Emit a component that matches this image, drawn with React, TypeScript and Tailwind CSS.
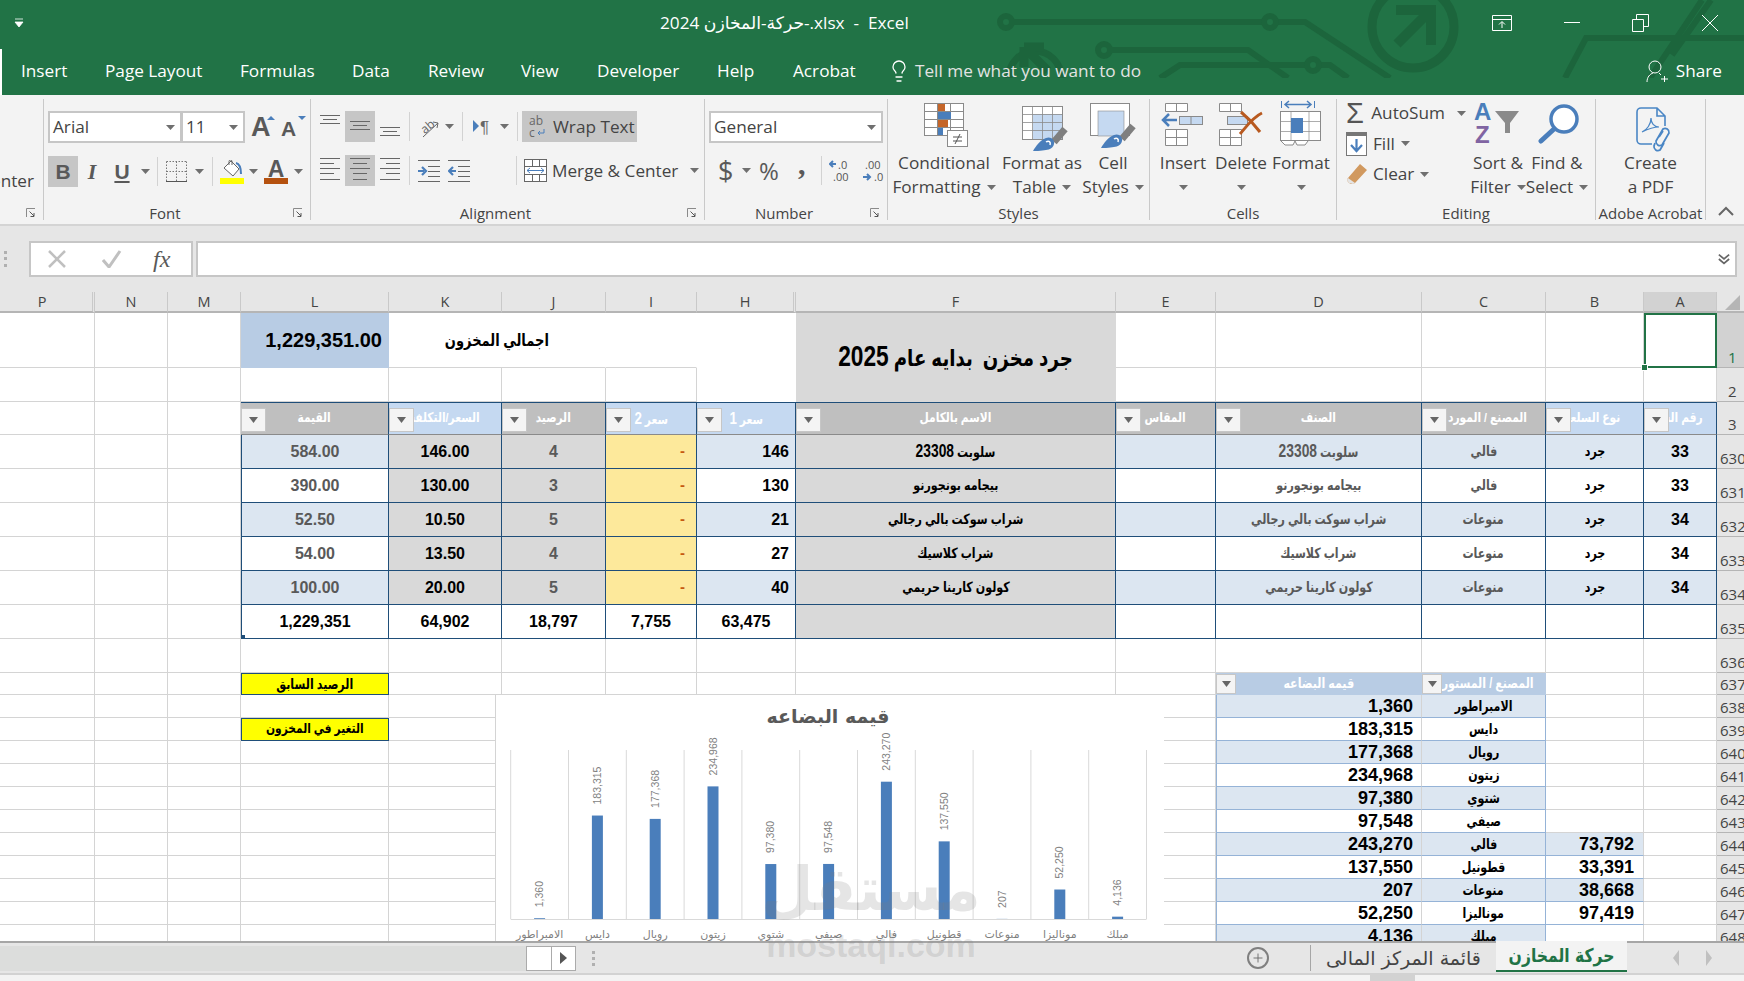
import { Lightbulb, Plus } from "lucide-react";
import { twMerge } from "tailwind-merge";
import type { ReactNode } from "react";

const BLUE = "border-[#1f4e79]";

function Caret({ className = "" }: { className?: string }) {
  return (
    <svg width="9" height="5" viewBox="0 0 9 5" className={twMerge("inline-block shrink-0", className)}>
      <path d="M0 0h9L4.5 5z" fill="#6f6f6f" />
    </svg>
  );
}

function Launcher() {
  return (
    <svg width="10" height="10" viewBox="0 0 10 10" className="absolute right-[7px] top-[6px]">
      <path d="M.5 9V.5H9" fill="none" stroke="#8a8a8a" />
      <path d="M3.5 3.5L8 8M8 5v3.5H4.5" fill="none" stroke="#555" />
    </svg>
  );
}

function Group({ w, label, launcher, children }: { w: string; label?: string; launcher?: boolean; children: ReactNode }) {
  return (
    <div className={twMerge("relative flex flex-col shrink-0 h-full", w)}>
      <div className="flex-1 min-h-0">{children}</div>
      <div className={twMerge("relative h-[22px] leading-[24px] text-center text-[15px] text-[#444] whitespace-nowrap", launcher && "pr-[24px]")}>
        {label}
        {launcher && <Launcher />}
      </div>
    </div>
  );
}

const GroupSep = () => <div className="w-px shrink-0 my-1 bg-[#c9c9c9]" />;
const ToolSep = ({ className = "" }: { className?: string }) => <div className={twMerge("w-px h-[29px] bg-[#d2d2d2] shrink-0", className)} />;

function Lines({ rows, selected, w = "w-[20px]" }: { rows: [number, number, number][]; selected?: boolean; w?: string }) {
  return (
    <div className={twMerge("h-[31px] flex items-center justify-center shrink-0", w, selected && "bg-[#c6c6c6]")}>
      <svg width="20" height="31" viewBox="0 0 20 31">
        {rows.map(([x, y, l], i) => (
          <path key={i} d={`M${x} ${y + 0.5}h${l}`} stroke="#666" />
        ))}
      </svg>
    </div>
  );
}

function Combo({ w, text }: { w: string; text: string }) {
  return (
    <div className={twMerge("flex items-center justify-between h-[32px] bg-white border-2 border-[#c6c6c6] pl-[3px] pr-[5px] text-[17.2px] text-[#444] shrink-0", w)}>
      <span>{text}</span>
      <Caret />
    </div>
  );
}

function BigBtn({ w, icon, l1, l2, caret = true }: { w: string; icon: ReactNode; l1: string; l2?: string; caret?: boolean }) {
  return (
    <div className={twMerge("flex flex-col items-center shrink-0 text-[17.2px] leading-[24px] text-[#444] whitespace-nowrap", w)}>
      <div className="h-[48px] flex items-start justify-center">{icon}</div>
      <div>{l1}</div>
      <div className="flex items-center gap-[6px] h-[24px]">
        {l2}
        {caret && <Caret />}
      </div>
    </div>
  );
}

const G = "#8a8a8a";

const CondIcon = () => (
  <svg width="46" height="46" viewBox="0 0 46 46" className="ml-[6px]">
    <rect x=".5" y=".5" width="39" height="32" fill="#fff" stroke={G} />
    <path d="M13.5 0v32M26.5 0v32M0 8.5h40M0 16.5h40M0 24.5h40" stroke={G} />
    <rect x="14" y="1" width="7" height="7" fill="#c5662a" />
    <rect x="14" y="9" width="13" height="7" fill="#4a7ebb" />
    <rect x="14" y="17" width="10" height="7" fill="#c5662a" />
    <rect x="14" y="25" width="5" height="7" fill="#4a7ebb" />
    <rect x="23.5" y="27.5" width="20" height="16" fill="#fff" stroke={G} />
    <path d="M29 34h9M29 38h9M36 31l-5 10" stroke="#555" fill="none" />
  </svg>
);

const Brush = () => (
  <>
    <path d="M43 23L32 36" stroke="#7f7f7f" strokeWidth="7" fill="none" />
    <path d="M11 45c3-5 7-11 13-13 5-2 9 2 8 6-1 5-6 7-21 7z" fill="#4a7ebb" />
    <path d="M24 36c3-2 5 0 4 3" stroke="#fff" strokeWidth="1.5" fill="none" />
  </>
);

const TableIcon = () => (
  <svg width="46" height="46" viewBox="0 0 46 46" className="mt-[3px] ml-[6px]">
    <rect x=".5" y=".5" width="40" height="33" fill="#fff" stroke={G} />
    <rect x="11" y="8" width="29" height="25" fill="#c5d9f1" />
    <path d="M10.5 0v33M20.5 0v33M30.5 0v33M0 8.5h40M0 16.5h40M0 24.5h40" stroke={G} strokeWidth=".8" />
    <Brush />
  </svg>
);

const CellStyleIcon = () => (
  <svg width="46" height="46" viewBox="0 0 46 46">
    <rect x=".5" y=".5" width="39" height="32" fill="#fff" stroke={G} />
    <rect x="8" y="8" width="26" height="25" fill="#c5d9f1" stroke={G} strokeWidth=".6" />
    <Brush />
  </svg>
);

const InsertIcon = () => (
  <svg width="44" height="46" viewBox="0 0 44 46">
    <path d="M4.5.5h22v8h-22zM15.5 0v8M4.5 26.5h22v16h-22zM4.5 34.5h22M15.5 26v16" fill="#fff" stroke={G} />
    <rect x="18.5" y="13.5" width="23" height="8" fill="#c5d9f1" stroke={G} />
    <path d="M30 13v8" stroke={G} />
    <path d="M8 11l-6 6 6 6M2 17h14" fill="none" stroke="#4a7ebb" strokeWidth="2.5" />
  </svg>
);

const DeleteIcon = () => (
  <svg width="44" height="46" viewBox="0 0 44 46">
    <path d="M.5.5h22v8H.5zM11.5 0v8M.5 26.5h22v16H.5zM.5 34.5h22M11.5 26v16" fill="#fff" stroke={G} />
    <rect x="8.5" y="13.5" width="20" height="8" fill="#c5d9f1" stroke={G} />
    <path d="M21 31C27 24 34 14 43 10M22 9c6 5 13 12 19 20" fill="none" stroke="#b8591f" strokeWidth="3" />
  </svg>
);

const FormatIcon = () => (
  <svg width="42" height="46" viewBox="0 0 42 46" className="mt-[-3px]">
    <path d="M1.5 1v7M34.5 1v7" stroke="#4a7ebb" />
    <path d="M5 4.5h26M9 1L5 4.5 9 8M27 1l4 3.5L27 8" fill="none" stroke="#4a7ebb" strokeWidth="1.5" />
    <rect x=".5" y="11.5" width="40" height="29" fill="#fff" stroke={G} />
    <path d="M11 11v30M29 11v30M0 21.5h40M0 31.5h40" stroke={G} strokeWidth=".7" />
    <rect x="11" y="18" width="12" height="15" fill="#4a7ebb" />
    <path d="M1 41l4 4h8l2-4 2 4h8l3-4" fill="#fff" stroke={G} />
  </svg>
);

const SortIcon = () => (
  <svg width="48" height="44" viewBox="0 0 48 44" className="mt-[-2px]">
    <text x="0" y="19" fontSize="24" fontWeight="700" fill="#4a7ebb" fontFamily="Liberation Sans">A</text>
    <text x="1" y="42" fontSize="24" fontWeight="700" fill="#8064a2" fontFamily="Liberation Sans">Z</text>
    <path d="M21 10h24l-9 12v10h-5V22z" fill="#8a8a8a" />
  </svg>
);

const FindIcon = () => (
  <svg width="44" height="42" viewBox="0 0 44 42" className="ml-[6px]">
    <circle cx="26" cy="16" r="13" fill="#fff" stroke="#4a7ebb" strokeWidth="3.5" />
    <path d="M16 26L3 38" stroke="#4a7ebb" strokeWidth="5" strokeLinecap="round" />
  </svg>
);

const PdfIcon = () => (
  <svg width="40" height="46" viewBox="0 0 40 46" className="ml-[8px]">
    <path d="M2 5a4 4 0 0 1 4-4h16l8 8v10M17 37H6a4 4 0 0 1-4-4V5M22 1v8h8" fill="none" stroke="#4a86c5" strokeWidth="1.6" />
    <path d="M7 25c5-2 9-8 9-14 0 5 3 9 8 9-6 0-11 2-17 5z" fill="none" stroke="#4a86c5" strokeWidth="1.2" />
    <path d="M28 22l-7 12a4 4 0 0 0 6 4l7-12a4 4 0 0 0-6-4zM24 30l4-6" fill="none" stroke="#4a86c5" strokeWidth="1.8" />
    <path d="M20 36l-1 3a4 4 0 0 0 6 4l4-7" fill="none" stroke="#4a86c5" strokeWidth="1.8" />
  </svg>
);

function Ribbon() {
  const topA: [number, number, number][] = [[0, 4, 20], [3, 8, 14], [0, 12, 20]];
  const midA: [number, number, number][] = [[0, 10, 20], [3, 14, 14], [0, 18, 20]];
  const botA: [number, number, number][] = [[0, 16, 20], [3, 20, 14], [0, 24, 20]];
  const leftA: [number, number, number][] = [[0, 3, 20], [0, 8, 14], [0, 13, 20], [0, 18, 14], [0, 24, 20]];
  const centerA: [number, number, number][] = [[0, 3, 20], [3, 8, 14], [0, 13, 20], [3, 18, 14], [3, 24, 14]];
  const rightA: [number, number, number][] = [[0, 3, 20], [6, 8, 14], [0, 13, 20], [6, 18, 14], [0, 24, 20]];
  return (
    <div className="flex h-[131px] shrink-0 bg-[#f3f3f3] border-b-2 border-[#d4d4d4]">
      <Group w="w-[43px]" launcher>
        <div className="h-full overflow-hidden relative">
          <span className="absolute right-[9px] top-[74px] text-[17.2px] text-[#444] leading-[24px] whitespace-nowrap">Center</span>
        </div>
      </Group>
      <GroupSep />

      <Group w="w-[266px]" label="Font" launcher>
        <div className="flex items-start pt-[16px] pl-[4px] h-[48px]">
          <Combo w="w-[134px]" text="Arial" />
          <Combo w="w-[64px] ml-[-1px]" text="11" />
          <span className="ml-[6px] relative w-[24px] h-[32px] text-[27px] leading-[32px] font-['Liberation_Sans'] font-bold text-[#595959]">A
            <span className="absolute right-0 top-[5px] w-0 h-0 border-x-[4px] border-x-transparent border-b-[4px] border-b-[#4a7ebb]" />
          </span>
          <span className="ml-[6px] relative w-[26px] h-[32px] text-[21px] leading-[36px] font-['Liberation_Sans'] font-bold text-[#595959]">A
            <span className="absolute right-[1px] top-[5px] w-0 h-0 border-x-[4px] border-x-transparent border-t-[4px] border-t-[#4a7ebb]" />
          </span>
        </div>
        <div className="flex items-center mt-[13px] pl-[4px] h-[31px] font-['Liberation_Sans'] text-[#595959]">
          <div className="w-[30px] h-[31px] bg-[#c6c6c6] flex items-center justify-center text-[21px] font-bold">B</div>
          <div className="w-[28px] text-center text-[22px] italic font-['Liberation_Serif'] font-bold">I</div>
          <div className="w-[32px] text-center text-[21px] font-bold underline underline-offset-2">U</div>
          <div className="w-[14px] flex justify-center"><Caret /></div>
          <ToolSep className="ml-[5px]" />
          <svg width="21" height="21" viewBox="0 0 21 21" className="ml-[8px]">
            <path d="M.5 .5h20M.5 10.5h20M.5 .5v20M10.5 .5v20M20.5 .5v20" stroke="#777" strokeDasharray="1.5 1.5" fill="none" />
            <path d="M0 20.5h21" stroke="#555" />
          </svg>
          <Caret className="ml-[8px]" />
          <ToolSep className="ml-[8px]" />
          <div className="ml-[7px] w-[24px] flex flex-col items-center">
            <svg width="20" height="18" viewBox="0 0 20 18">
              <path d="M9 1l8 8-6 7-9-8z" fill="#fff" stroke="#666" />
              <path d="M7 5V1.5a1.5 1.5 0 0 1 3 0V5" fill="none" stroke="#666" />
              <path d="M14 3c4 1 5 5 5 11" fill="none" stroke="#4a7ebb" strokeWidth="2" />
            </svg>
            <div className="w-[24px] h-[6px] bg-[#ffff00]" />
          </div>
          <Caret className="ml-[5px]" />
          <div className="ml-[6px] w-[24px] flex flex-col items-center">
            <span className="text-[23px] leading-[18px] font-bold h-[18px]">A</span>
            <div className="w-[24px] h-[6px] bg-[#b5510f]" />
          </div>
          <Caret className="ml-[6px]" />
        </div>
      </Group>
      <GroupSep />

      <Group w="w-[393px]" label="Alignment" launcher>
        <div className="flex items-center pt-[16px] pl-[9px]">
          <Lines rows={topA} />
          <Lines rows={midA} selected w="w-[30px] ml-[5px]" />
          <Lines rows={botA} w="w-[20px] ml-[5px]" />
          <ToolSep className="ml-[9px]" />
          <svg width="22" height="26" viewBox="0 0 22 26" className="ml-[9px]">
            <text x="1" y="17" fontSize="12" fill="#666" transform="rotate(-40 8 12)" fontFamily="Open Sans">ab</text>
            <path d="M4 23L19 9M14 8l5 1-1 5" fill="none" stroke="#666" />
          </svg>
          <Caret className="ml-[4px]" />
          <ToolSep className="ml-[8px]" />
          <svg width="19" height="20" viewBox="0 0 19 20" className="ml-[10px]">
            <path d="M0 3l6 6-6 6z" fill="#4a7ebb" />
            <text x="7" y="16" fontSize="17" fill="#666" fontFamily="Liberation Sans">¶</text>
          </svg>
          <Caret className="ml-[8px]" />
          <ToolSep className="ml-[8px]" />
          <div className="ml-[4px] w-[115px] h-[31px] bg-[#c6c6c6] flex items-center pl-[7px] gap-[7px] text-[17.2px] text-[#444]">
            <svg width="17" height="24" viewBox="0 0 17 24">
              <text x="0" y="10" fontSize="12" fill="#666" fontFamily="Open Sans">ab</text>
              <text x="0" y="22" fontSize="12" fill="#666" fontFamily="Open Sans">c</text>
              <path d="M15 14v4H9M11 16l-2 2 2 2" fill="none" stroke="#4a7ebb" />
            </svg>
            <span>Wrap Text</span>
          </div>
        </div>
        <div className="flex items-center mt-[13px] pl-[9px] h-[31px]">
          <Lines rows={leftA} />
          <Lines rows={centerA} selected w="w-[30px] ml-[5px]" />
          <Lines rows={rightA} w="w-[20px] ml-[5px]" />
          <ToolSep className="ml-[9px]" />
          <svg width="22" height="22" viewBox="0 0 22 22" className="ml-[8px]">
            <path d="M0 .5h22M10 6.5h12M10 11.5h12M10 16.5h12M0 21.5h22" stroke="#666" />
            <path d="M0 11h6M4 7l4 4-4 4" fill="none" stroke="#4a7ebb" strokeWidth="2.2" />
          </svg>
          <svg width="22" height="22" viewBox="0 0 22 22" className="ml-[8px]">
            <path d="M0 .5h22M10 6.5h12M10 11.5h12M10 16.5h12M0 21.5h22" stroke="#666" />
            <path d="M8 11H2M5 7l-4 4 4 4" fill="none" stroke="#4a7ebb" strokeWidth="2.2" />
          </svg>
          <ToolSep className="ml-[46px]" />
          <svg width="23" height="23" viewBox="0 0 23 23" className="ml-[7px]">
            <rect x=".5" y=".5" width="22" height="22" fill="#fff" stroke="#666" />
            <path d="M0 7.5h23M0 15.5h23M8.5 0v7M15.5 0v7M8.5 16v7M15.5 16v7" stroke="#666" />
            <path d="M3 11.5h17M6 9l-3 2.5L6 14M17 9l3 2.5L17 14" fill="none" stroke="#4a7ebb" />
          </svg>
          <span className="ml-[5px] text-[17.2px] text-[#444] whitespace-nowrap">Merge &amp; Center</span>
          <Caret className="ml-[12px]" />
        </div>
      </Group>
      <GroupSep />

      <Group w="w-[182px]" label="Number" launcher>
        <div className="pt-[16px] pl-[4px]"><Combo w="w-[174px]" text="General" /></div>
        <div className="flex items-center mt-[12px] pl-[13px] h-[31px] text-[#595959]">
          <span className="w-[20px] text-[27px] leading-[31px] font-['Open_Sans']">$</span>
          <Caret className="ml-[4px]" />
          <span className="ml-[8px] w-[22px] text-[24px] leading-[31px] font-['Open_Sans']">%</span>
          <span className="ml-[17px] w-[9px] text-[30px] leading-[26px] font-bold font-['Liberation_Serif'] h-[26px] -mt-[14px]">,</span>
          <ToolSep className="ml-[14px]" />
          <svg width="24" height="26" viewBox="0 0 24 26" className="ml-[7px]">
            <path d="M7 6H1M4 3L1 6l3 3" fill="none" stroke="#4a7ebb" strokeWidth="2" />
            <text x="9" y="11" fontSize="11" fill="#555" fontFamily="Open Sans">.0</text>
            <text x="4" y="23" fontSize="11" fill="#555" fontFamily="Open Sans">.00</text>
          </svg>
          <svg width="24" height="26" viewBox="0 0 24 26" className="ml-[9px]">
            <text x="3" y="11" fontSize="11" fill="#555" fontFamily="Open Sans">.00</text>
            <path d="M1 19h7M5 16l3 3-3 3" fill="none" stroke="#4a7ebb" strokeWidth="2" />
            <text x="12" y="23" fontSize="11" fill="#555" fontFamily="Open Sans">.0</text>
          </svg>
        </div>
      </Group>
      <GroupSep />

      <Group w="w-[261px]" label="Styles">
        <div className="flex pt-[8px]">
          <BigBtn w="w-[112px]" icon={<CondIcon />} l1="Conditional" l2="Formatting" />
          <BigBtn w="w-[84px]" icon={<TableIcon />} l1="Format as" l2="Table" />
          <BigBtn w="w-[58px]" icon={<CellStyleIcon />} l1="Cell" l2="Styles" />
        </div>
      </Group>
      <GroupSep />

      <Group w="w-[186px]" label="Cells">
        <div className="flex pt-[8px]">
          <BigBtn w="w-[66px]" icon={<InsertIcon />} l1="Insert" />
          <BigBtn w="w-[50px]" icon={<DeleteIcon />} l1="Delete" />
          <BigBtn w="w-[70px]" icon={<FormatIcon />} l1="Format" />
        </div>
      </Group>
      <GroupSep />

      <Group w="w-[258px]" label="Editing">
        <div className="flex pt-[8px]">
          <div className="w-[129px] shrink-0 flex flex-col text-[17.2px] text-[#444] pl-[9px] -mt-[5px]">
            <div className="flex items-center h-[30px]">
              <span className="w-[27px] text-[29px] leading-[30px] font-['Liberation_Sans'] text-[#555]">Σ</span>
              <span>AutoSum</span>
              <Caret className="ml-[12px]" />
            </div>
            <div className="flex items-center h-[31px]">
              <svg width="21" height="24" viewBox="0 0 21 24" className="mr-[6px]">
                <rect x=".5" y=".5" width="20" height="23" fill="#fff" stroke="#777" />
                <rect x="0" y="0" width="21" height="4" fill="#777" />
                <path d="M10.5 7v11M5 13l5.5 6 5.5-6" fill="none" stroke="#4a7ebb" strokeWidth="2.2" />
              </svg>
              <span>Fill</span>
              <Caret className="ml-[6px]" />
            </div>
            <div className="flex items-center h-[30px]">
              <svg width="22" height="22" viewBox="0 0 22 22" className="mr-[5px]">
                <path d="M14 1l7 6-12 13c-3 2-5 1-7-1-1-2-1-3 0-4z" fill="#d1995f" />
                <path d="M2 15l7 5-2 1-4-1-2-3z" fill="#e4e4e4" />
              </svg>
              <span>Clear</span>
              <Caret className="ml-[6px]" />
            </div>
          </div>
          <BigBtn w="w-[64px]" icon={<SortIcon />} l1="Sort &" l2="Filter" />
          <BigBtn w="w-[54px]" icon={<FindIcon />} l1="Find &" l2="Select" />
        </div>
      </Group>
      <GroupSep />

      <Group w="w-[109px]" label="Adobe Acrobat">
        <div className="flex justify-center pt-[8px]">
          <BigBtn w="w-[80px]" icon={<div className="mt-[4px]"><PdfIcon /></div>} l1="Create" l2="a PDF" caret={false} />
        </div>
      </Group>
      <GroupSep />
      <div className="flex-1 relative">
        <svg width="16" height="10" viewBox="0 0 16 10" className="absolute left-[12px] bottom-[8px]">
          <path d="M1 9l7-7 7 7" fill="none" stroke="#666" strokeWidth="2" />
        </svg>
      </div>
    </div>
  );
}

function Header() {
  const tabs: [string, string][] = [
    ["Insert", "w-[84px]"], ["Page Layout", "w-[135px]"], ["Formulas", "w-[112px]"], ["Data", "w-[76px]"], ["Review", "w-[93px]"],
    ["View", "w-[76px]"], ["Developer", "w-[120px]"], ["Help", "w-[76px]"], ["Acrobat", "w-[97px]"],
  ];
  return (
    <div className="relative h-[95px] shrink-0 bg-[#217346] text-white overflow-hidden">
      <svg width="1744" height="78" viewBox="0 0 1744 78" className="absolute left-0 top-0" fill="none" stroke="#1c653c" strokeWidth="6">
        <circle cx="1006" cy="22" r="6" />
        <path d="M1012 22h252M1276 22h29l85 56" />
        <circle cx="1270" cy="22" r="6" />
        <circle cx="1104" cy="50" r="6" />
        <path d="M1110 50h138l40 28" />
        <path d="M1160 78l20-13h127M1319 65h11l18 13" />
        <circle cx="1313" cy="65" r="6" />
        <circle cx="1035" cy="77" r="26" strokeWidth="7" />
        <path d="M1024 47h20M1024 47v20M1024 47l24 24" strokeWidth="9" />
        <circle cx="1413" cy="27" r="41" strokeWidth="9" />
        <path d="M1396 10h35v35M1431 10l-34 34" strokeWidth="10" />
        <path d="M1565 78l21-40h158M1650 78l52-78M1672 55l39-55" />
      </svg>
      <div className="relative flex items-center justify-between h-[49px]">
        <svg width="10" height="10" viewBox="0 0 10 10" className="ml-[14px] mb-[4px]">
          <path d="M1 1h8M1 4h8L5 9z" fill="#fff" stroke="#fff" strokeWidth=".8" />
        </svg>
        <div className="absolute left-[660px] top-[10px] text-[17.2px] leading-[26px] whitespace-pre">2024 حركة-المخازن-.xlsx  -  Excel</div>
        <div className="flex items-center mb-[4px]">
          <svg width="20" height="16" viewBox="0 0 20 16" stroke="#fff" fill="none" className="mr-[52px]">
            <path d="M.5.5h19v15H.5zM0 4.5h20M10 13V7M7 9.5L10 6.5l3 3" />
          </svg>
          <div className="w-[16px] h-px bg-white mr-[52px]" />
          <svg width="18" height="18" viewBox="0 0 18 18" stroke="#fff" fill="none" className="mr-[51px]">
            <path d="M.5 5.5h11v12H.5zM4.5 5V.5h12v12H12" />
          </svg>
          <svg width="18" height="18" viewBox="0 0 18 18" stroke="#fff" fill="none" className="mr-[25px]">
            <path d="M1 1l16 16M17 1L1 17" />
          </svg>
        </div>
      </div>
      <div className="relative flex items-center h-[46px] border-l-2 border-white pl-[19px] pb-[2px] text-[17.2px]">
        {tabs.map(([t, w]) => (
          <div key={t} className={w}>{t}</div>
        ))}
        <Lightbulb size={24} strokeWidth={1.3} className="ml-[-3px] text-white" />
        <span className="ml-[4px] text-[#e3e3e3]">Tell me what you want to do</span>
        <div className="ml-auto flex items-center pr-[22px]">
          <svg width="22" height="24" viewBox="0 0 22 24" fill="none" stroke="#fff" className="mr-[8px]">
            <circle cx="9" cy="8" r="6" />
            <path d="M1 23c0-5 3-8 6-9M13 14l2 2M15 20h7M18.5 17v6" />
          </svg>
          Share
        </div>
      </div>
    </div>
  );
}

function FormulaBar() {
  return (
    <div className="flex items-center h-[66px] shrink-0 bg-[#e6e6e6] pl-[4px] pr-[7px] pb-[1px]">
      <div className="w-[4px] h-[16px] flex flex-col justify-between">
        <i className="w-[3px] h-[3px] bg-[#b0b0b0]" />
        <i className="w-[3px] h-[3px] bg-[#b0b0b0]" />
        <i className="w-[3px] h-[3px] bg-[#b0b0b0]" />
      </div>
      <div className="ml-[21px] w-[164px] h-[36px] bg-white border-2 border-[#c6c6c6] flex items-center relative">
        <svg width="18" height="18" viewBox="0 0 18 18" className="ml-[17px]"><path d="M1 1l16 16M17 1L1 17" stroke="#c0c0c0" strokeWidth="2.5" /></svg>
        <svg width="20" height="18" viewBox="0 0 20 18" className="ml-[36px]"><path d="M1 10l6 7L18 1" fill="none" stroke="#c0c0c0" strokeWidth="3" /></svg>
        <span className="ml-[31px] text-[24px] italic font-['Liberation_Serif'] text-[#595959]">fx</span>
      </div>
      <div className="ml-[3px] flex-1 h-[36px] bg-white border-2 border-[#c6c6c6] flex items-center justify-end pr-[5px]">
        <svg width="12" height="12" viewBox="0 0 14 12"><path d="M1 1l6 5 6-5M1 6l6 5 6-5" fill="none" stroke="#666" strokeWidth="2" /></svg>
      </div>
    </div>
  );
}

function Cell({ className = "", children }: { className?: string; children?: ReactNode }) {
  return (
    <div className={twMerge("relative flex items-center justify-center min-w-0 overflow-hidden whitespace-nowrap border-r border-b border-[#d4d4d4] bg-white", className)}>
      {children}
    </div>
  );
}

// DejaVu's Arabic runs wider than Arial's, so squeeze it; digits get bumped back up to the Arial size
function Ar({ children, end }: { children?: string; end?: boolean }) {
  const parts = (children ?? "").split(/(\d+)/);
  return (
    <span dir="rtl" className={twMerge("inline-block whitespace-pre scale-x-[.79] origin-center", end && "origin-right")}>
      {parts.map((p, i) => (/^\d+$/.test(p) ? <span key={i} className="text-[1.25em] font-['Liberation_Sans']">{p}</span> : p))}
    </span>
  );
}

function Filter({ small }: { small?: boolean }) {
  return (
    <span className={twMerge("absolute left-0 bottom-[2px] w-[25px] h-[24px] bg-[#f4f4f4] border border-[#c6c6c6] flex items-center justify-center", small && "w-[20px] h-[20px] bottom-0")}>
      <svg width="9" height="6" viewBox="0 0 9 6"><path d="M0 0h9L4.5 6z" fill="#666" /></svg>
    </span>
  );
}

function HeadCell({ text, tone, pad }: { text?: string; tone: "gray" | "blue"; pad?: string }) {
  return (
    <Cell className={twMerge("text-white font-bold text-[13.5px] border-[#8a8a8a] border-r-[#1f4e79] border-t border-t-[#1f4e79]", tone === "gray" ? "bg-[#bfbfbf]" : "bg-[#c5d9f1]", pad)}>
      <Ar end={!!pad}>{text}</Ar>
      <Filter />
    </Cell>
  );
}

function ColHead({ t, active, className = "" }: { t: string; active?: boolean; className?: string }) {
  return (
    <div className={twMerge("flex items-center justify-center border-r border-b-2 border-[#b5b5b5] border-r-[#c9c9c9] bg-[#e6e6e6] text-[14.5px] text-[#444] font-['Open_Sans']", active && "bg-[#d2d2d2]", className)}>
      {t}
    </div>
  );
}

function RowHead({ n, active }: { n: number; active?: boolean }) {
  return (
    <div className={twMerge("flex items-end overflow-hidden border-b border-[#b5b5b5] bg-[#e6e6e6] text-[15px] leading-[20px] text-[#444] font-['Open_Sans']", n < 10 ? "pl-[11px]" : "pl-[3px]", active && "bg-[#d2d2d2] text-[#217346]")}>
      {n}
    </div>
  );
}

const Blank = ({ n }: { n: number }) => (
  <>
    {Array.from({ length: n }, (_, i) => (
      <Cell key={i} />
    ))}
  </>
);

const items = [
  { n: 630, a: 33, c: "فالي", d: "سلوبت 23308", h: 146, j: 4, k: "146.00", l: "584.00" },
  { n: 631, a: 33, c: "فالي", d: "بيجامه بونجورنو", h: 130, j: 3, k: "130.00", l: "390.00" },
  { n: 632, a: 34, c: "منوعات", d: "شراب سوكت بالي رجالي", h: 21, j: 5, k: "10.50", l: "52.50" },
  { n: 633, a: 34, c: "منوعات", d: "شراب كلاسيك", h: 27, j: 4, k: "13.50", l: "54.00" },
  { n: 634, a: 34, c: "منوعات", d: "كولون كارينا حريمي", h: 40, j: 5, k: "20.00", l: "100.00" },
];

const stock: [string, string, string?][] = [
  ["1,360", "الامبراطور"],
  ["183,315", "دايس"],
  ["177,368", "رويال"],
  ["234,968", "زيتون"],
  ["97,380", "شتوي"],
  ["97,548", "صيفي"],
  ["243,270", "فالي", "73,792"],
  ["137,550", "قطونيل", "33,391"],
  ["207", "منوعات", "38,668"],
  ["52,250", "موناليزا", "97,419"],
  ["4,136", "مبلك"],
];

const chartData = [
  [1360, "الامبراطور"], [183315, "دايس"], [177368, "رويال"], [234968, "زيتون"], [97380, "شتوي"], [97548, "صيفي"],
  [243270, "فالي"], [137550, "قطونيل"], [207, "منوعات"], [52250, "موناليزا"], [4136, "مبلك"],
] as [number, string][];

function Chart() {
  const step = 57.8;
  const left = 14.7;
  const base = 224;
  return (
    <div className="absolute left-[495px] top-[403px] w-[669px] h-[246px] bg-white border-l border-[#d4d4d4]">
      <svg width="669" height="246" viewBox="0 0 669 246" fontFamily="DejaVu Sans">
        <text x="332" y="28" textAnchor="middle" fontSize="19" fontWeight="700" fill="#595959" letterSpacing="1.5" direction="rtl">قيمه البضاعه</text>
        {chartData.map(([v, name], i) => {
          const cx = left + step * (i + 0.5);
          const h = (v * 137.3) / 243270;
          return (
            <g key={name}>
              <rect x={cx - 5.5} y={base - h} width="11" height={h} fill="#4a7ebb" />
              <text
                transform={`translate(${cx + 3.5} ${base - h - 11}) rotate(-90)`}
                fontSize="10.5"
                fill="#7f7f7f"
                fontFamily="Liberation Sans"
              >
                {v.toLocaleString("en-US")}
              </text>
              <text x={cx} y="243" textAnchor="middle" fontSize="11" fill="#7f7f7f" letterSpacing="1">{name}</text>
            </g>
          );
        })}
        {Array.from({ length: 12 }, (_, i) => (
          <path key={i} d={`M${left + step * i} 55V${base}`} stroke="#d9d9d9" />
        ))}
        <path d={`M${left} ${base + 0.5}H${left + step * 11}`} stroke="#d9d9d9" />
      </svg>
    </div>
  );
}

function Sheet() {
  return (
    <div className="relative flex-1 min-h-0 overflow-hidden font-['Liberation_Sans','DejaVu_Sans',sans-serif] text-black">
      <div className="grid grid-cols-[95px_73px_73px_148px_113px_104px_91px_99px_320px_100px_206px_124px_98px_73px_27px] grid-rows-[21px_55px_34px_33px_repeat(6,34px)_34px_22px_repeat(11,23px)] w-[1744px]">
        {/* column letters */}
        <ColHead t="P" className="border-r-[3px] border-double pr-[8px]" />
        {["N", "M", "L", "K", "J", "I"].map((t) => <ColHead key={t} t={t} />)}
        <ColHead t="H" className="border-r-[3px] border-double" />
        {["F", "E", "D", "C", "B"].map((t) => <ColHead key={t} t={t} />)}
        <ColHead t="A" active />
        <div className="relative bg-[#e6e6e6] border-b-2 border-[#b5b5b5]">
          <span className="absolute right-[4px] bottom-[1px] w-0 h-0 border-l-[15px] border-l-transparent border-b-[15px] border-b-[#b5b5b5]" />
        </div>

        {/* row 1 */}
        <Blank n={3} />
        <Cell className="bg-[#b8cce4] justify-end pr-[6px] text-[20px] font-bold border-[#b8cce4]">1,229,351.00</Cell>
        <Cell className="col-span-2 text-[16.5px] font-bold border-r-white"><Ar>اجمالي المخزون</Ar></Cell>
        <Cell className="border-r-white" />
        <Cell className="row-span-2 border-r-0 border-b-0" />
        <Cell className="row-span-2 bg-[#d9d9d9] text-[23px] font-bold border-[#d9d9d9]"><Ar>جرد مخزن  بدايه عام 2025</Ar></Cell>
        <Blank n={3} />
        <Cell />
        <Cell className="border-2 border-[#217346] overflow-visible">
          <span className="absolute left-[-5px] bottom-[-5px] w-[7px] h-[7px] bg-[#217346] border border-white z-10" />
        </Cell>
        <RowHead n={1} active />

        {/* row 2 */}
        <Blank n={3} />
        <Blank n={4} />
        <Blank n={5} />
        <RowHead n={2} />

        {/* row 3 */}
        <Blank n={3} />
        <HeadCell text="القيمة" tone="gray" />
        <HeadCell text="السعر/التكلفه" tone="blue" pad="justify-end pr-[21px]" />
        <HeadCell text="الرصيد" tone="gray" />
        <HeadCell text="سعر 2" tone="blue" />
        <HeadCell text="سعر 1" tone="blue" />
        <HeadCell text="الاسم بالكامل" tone="gray" />
        <HeadCell text="المقاس" tone="gray" />
        <HeadCell text="الصنف" tone="gray" />
        <HeadCell text="المصنع / المورد" tone="gray" pad="justify-end pr-[18px]" />
        <HeadCell text="نوع السلعة" tone="blue" pad="justify-end pr-[23px]" />
        <HeadCell text="رقم السند" tone="blue" pad="justify-end pr-[13px]" />
        <RowHead n={3} />

        {/* table body */}
        {items.map((r, i) => {
          const band = i % 2 === 0 ? "bg-[#dce6f1]" : "bg-white";
          return [
            <Blank key={`b${i}`} n={3} />,
            <Cell key={`l${i}`} className={twMerge("text-[16px] font-bold text-[#595959] border-l", BLUE, band)}>{r.l}</Cell>,
            <Cell key={`k${i}`} className={twMerge("bg-[#d9d9d9] text-[16px] font-bold", BLUE)}>{r.k}</Cell>,
            <Cell key={`j${i}`} className={twMerge("bg-[#d9d9d9] text-[16px] font-bold text-[#595959]", BLUE)}>{r.j}</Cell>,
            <Cell key={`i${i}`} className={twMerge("bg-[#fde99b] justify-end pr-[11px] text-[15px] font-bold text-[#c65911]", BLUE)}>-</Cell>,
            <Cell key={`h${i}`} className={twMerge("justify-end pr-[6px] text-[16px] font-bold", BLUE, band)}>{r.h}</Cell>,
            <Cell key={`f${i}`} className={twMerge("bg-[#d9d9d9] text-[14px] font-bold", BLUE)}><Ar>{r.d}</Ar></Cell>,
            <Cell key={`e${i}`} className={twMerge(BLUE, band)} />,
            <Cell key={`d${i}`} className={twMerge("text-[14px] font-bold text-[#595959]", BLUE, band)}><Ar>{r.d}</Ar></Cell>,
            <Cell key={`c${i}`} className={twMerge("text-[14px] font-bold text-[#595959]", BLUE, band)}><Ar>{r.c}</Ar></Cell>,
            <Cell key={`bb${i}`} className={twMerge("text-[14px] font-bold", BLUE, band)}><Ar>جرد</Ar></Cell>,
            <Cell key={`a${i}`} className={twMerge("text-[16px] font-bold", BLUE, band)}>{r.a}</Cell>,
            <RowHead key={`n${i}`} n={r.n} />,
          ];
        })}

        {/* totals row 635 */}
        <Blank n={3} />
        <Cell className={twMerge("text-[16px] font-bold border-l", BLUE)}>
          1,229,351
          <span className="absolute left-0 bottom-0 w-[3px] h-[3px] bg-[#1f4e79]" />
        </Cell>
        {["64,902", "18,797", "7,755", "63,475"].map((v) => (
          <Cell key={v} className={twMerge("text-[16px] font-bold", BLUE)}>{v}</Cell>
        ))}
        <Cell className={twMerge("bg-[#d9d9d9]", BLUE)} />
        <Cell className={BLUE} />
        <Cell className={BLUE} />
        <Cell className={BLUE} />
        <Cell className={BLUE} />
        <Cell className={BLUE} />
        <RowHead n={635} />

        {/* row 636 */}
        <Blank n={14} />
        <RowHead n={636} />

        {/* row 637 */}
        <Blank n={3} />
        <Cell className={twMerge("bg-[#ffff00] text-[14px] font-bold border-t border-l", BLUE)}><Ar>الرصيد السابق</Ar></Cell>
        <Blank n={6} />
        <Cell className="bg-[#b8cce4] text-white text-[14px] font-bold border-[#b8cce4]">
          <Ar>قيمه البضاعه</Ar>
          <Filter small />
        </Cell>
        <Cell className="bg-[#b8cce4] text-white text-[14px] font-bold justify-end pr-[11px] border-[#b8cce4]">
          <Ar end>المصنع / المستورد</Ar>
          <Filter small />
        </Cell>
        <Blank n={2} />
        <RowHead n={637} />

        {/* lower table */}
        {stock.map(([val, name, extra], i) => {
          const band = i % 2 === 0 ? "bg-[#dce6f1]" : "bg-white";
          return [
            <Blank key={`x${i}`} n={3} />,
            i === 1 ? (
              <Cell key={`y${i}`} className={twMerge("bg-[#ffff00] text-[13.5px] font-bold border-t border-l", BLUE)}><Ar>التغير في المخزون</Ar></Cell>
            ) : (
              <Cell key={`y${i}`} />
            ),
            <Blank key={`z${i}`} n={6} />,
            <Cell key={`v${i}`} className={twMerge("justify-end pr-[8px] text-[18px] font-bold border-b-[#95b3d7] border-r-[#d4d4d4] border-l border-l-[#95b3d7]", band)}>{val}</Cell>,
            <Cell key={`w${i}`} className={twMerge("text-[14px] font-bold border-b-[#95b3d7] border-r-[#95b3d7]", band)}><Ar>{name}</Ar></Cell>,
            extra ? (
              <Cell key={`q${i}`} className={twMerge("justify-end pr-[9px] text-[18px] font-bold border-b-[#95b3d7]", band)}>{extra}</Cell>
            ) : (
              <Cell key={`q${i}`} />
            ),
            <Cell key={`r${i}`} />,
            <RowHead key={`t${i}`} n={638 + i} />,
          ];
        })}
      </div>
      <Chart />
    </div>
  );
}

function SheetTabs() {
  return (
    <div className="relative flex items-center h-[34px] shrink-0 bg-[#e6e6e6] border-t-2 border-[#a6a6a6] border-b-2 border-b-[#d2d2d2] font-['DejaVu_Sans',sans-serif]">
      <div className="w-[526px] h-[25px] bg-[#dcdddc] shrink-0" />
      <div className="w-[26px] h-[25px] bg-white border border-[#ababab] shrink-0" />
      <div className="w-[24px] h-[25px] bg-white border border-l-0 border-[#ababab] flex items-center justify-center shrink-0">
        <span className="w-0 h-0 border-y-[6px] border-y-transparent border-l-[7px] border-l-[#555]" />
      </div>
      <div className="ml-[16px] flex flex-col gap-[3px]">
        <i className="w-[3px] h-[3px] bg-[#b0b0b0]" />
        <i className="w-[3px] h-[3px] bg-[#b0b0b0]" />
        <i className="w-[3px] h-[3px] bg-[#b0b0b0]" />
      </div>
      <div className="ml-[652px] w-[22px] h-[22px] rounded-full border-2 border-[#7f7f7f] flex items-center justify-center">
        <Plus size={14} className="text-[#666]" strokeWidth={1.5} />
      </div>
      <div className="ml-[41px] w-px h-[26px] bg-[#a6a6a6]" />
      <div className="w-[185px] text-center text-[19px] text-[#444]" dir="rtl">قائمة المركز المالى</div>
      <div className="self-start h-[31px] w-[131px] -mt-[2px] bg-[#f3f3f3] border-b-2 border-[#217346] text-center text-[19px] leading-[29px] font-bold text-[#217346]">
        <span dir="rtl" className="inline-block scale-x-[.82]">حركة المخازن</span>
      </div>
      <span className="ml-[46px] w-0 h-0 border-y-[8px] border-y-transparent border-r-[6px] border-r-[#c0c0c0]" />
      <span className="ml-[27px] w-0 h-0 border-y-[8px] border-y-transparent border-l-[6px] border-l-[#c0c0c0]" />
    </div>
  );
}

export default function App() {
  return (
    <div className="relative w-[1744px] h-[981px] overflow-hidden flex flex-col bg-white font-['Open_Sans','DejaVu_Sans',sans-serif]">
      <Header />
      <Ribbon />
      <FormulaBar />
      <Sheet />
      <SheetTabs />
      <div className="h-[6px] shrink-0 bg-[#f3f3f3] flex">
        <div className="ml-[1370px] w-[45px] bg-[#d2d2d2]" />
      </div>
      {/* mostaql watermark */}
      <div className="absolute left-[767px] top-[847px] w-[208px] flex flex-col items-center pointer-events-none text-[#7f7f7f]/20 font-bold">
        <span dir="rtl" className="text-[60px] leading-[80px]">مستقل</span>
        <span className="text-[34px] leading-[36px] font-['Liberation_Sans']">mostaql.com</span>
      </div>
    </div>
  );
}
